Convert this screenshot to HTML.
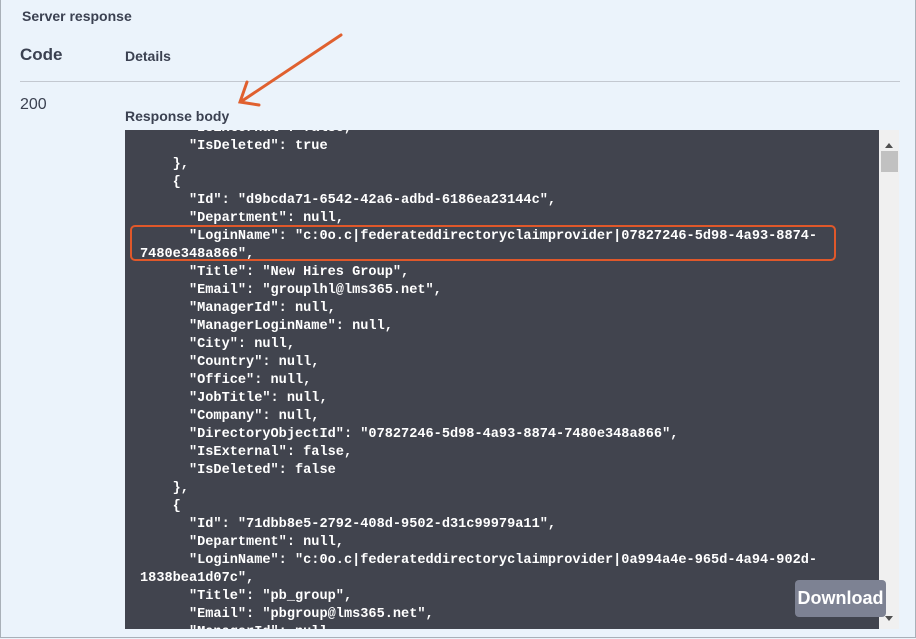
<html><head><style>
body{margin:0;width:916px;height:639px;background:#ebf3fb;font-family:"Liberation Sans",sans-serif;position:relative;overflow:hidden}
.frame{position:absolute;left:0;top:0;width:914px;height:637px;border:1px solid #a9b0b8;border-top:none}
.t{position:absolute;color:#3b4151;font-weight:bold}
.code{position:absolute;left:125px;top:130px;width:754px;height:499px;background:#41444e;overflow:hidden}
pre{margin:0;position:absolute;left:15px;top:-10px;font:bold 13.6px/18px "Liberation Mono",monospace;color:#fff}
.sb{position:absolute;left:879px;top:130px;width:20px;height:499px;background:#f0f0f0}
</style></head><body>
<div class="frame"></div>
<div class="t" style="left:22px;top:8px;font-size:14px">Server response</div>
<div class="t" style="left:20px;top:45px;font-size:17px">Code</div>
<div class="t" style="left:125px;top:48px;font-size:14px">Details</div>
<div style="position:absolute;left:20px;top:81px;width:880px;height:1px;background:#c3c8d0"></div>
<div style="position:absolute;left:20px;top:96px;font-size:16px;color:#3b4151">200</div>
<div class="t" style="left:125px;top:108px;font-size:14px">Response body</div>
<div class="code"><pre>      "IsExternal": false,
      "IsDeleted": true
    },
    {
      "Id": "d9bcda71-6542-42a6-adbd-6186ea23144c",
      "Department": null,
      "LoginName": "c:0o.c|federateddirectoryclaimprovider|07827246-5d98-4a93-8874-
7480e348a866",
      "Title": "New Hires Group",
      "Email": "grouplhl@lms365.net",
      "ManagerId": null,
      "ManagerLoginName": null,
      "City": null,
      "Country": null,
      "Office": null,
      "JobTitle": null,
      "Company": null,
      "DirectoryObjectId": "07827246-5d98-4a93-8874-7480e348a866",
      "IsExternal": false,
      "IsDeleted": false
    },
    {
      "Id": "71dbb8e5-2792-408d-9502-d31c99979a11",
      "Department": null,
      "LoginName": "c:0o.c|federateddirectoryclaimprovider|0a994a4e-965d-4a94-902d-
1838bea1d07c",
      "Title": "pb_group",
      "Email": "pbgroup@lms365.net",
      "ManagerId": null,</pre>
<div style="position:absolute;left:5px;top:95px;width:702px;height:32px;border:2px solid #e0582a;border-radius:5px"></div>
</div>
<div class="sb"><div style="position:absolute;left:2px;top:21px;width:17px;height:21px;background:#c1c1c1"></div>
<div style="position:absolute;left:6px;top:13px;border:4px solid transparent;border-bottom:5px solid #505050;border-top:none"></div>
<div style="position:absolute;left:6px;top:486px;border:4px solid transparent;border-top:5px solid #505050;border-bottom:none"></div></div>
<div style="position:absolute;left:795px;top:580px;width:91px;height:37px;background:#7d8293;border-radius:4px;color:#fff;font-weight:bold;font-size:18px;line-height:36px;text-align:center">Download</div>
<svg style="position:absolute;left:0;top:0" width="916" height="639"><g stroke="#e0602f" stroke-width="3" fill="none" stroke-linecap="round"><line x1="341" y1="35" x2="242" y2="101"/><polyline points="247,82 240,102 259,105"/></g></svg>
</body></html>
